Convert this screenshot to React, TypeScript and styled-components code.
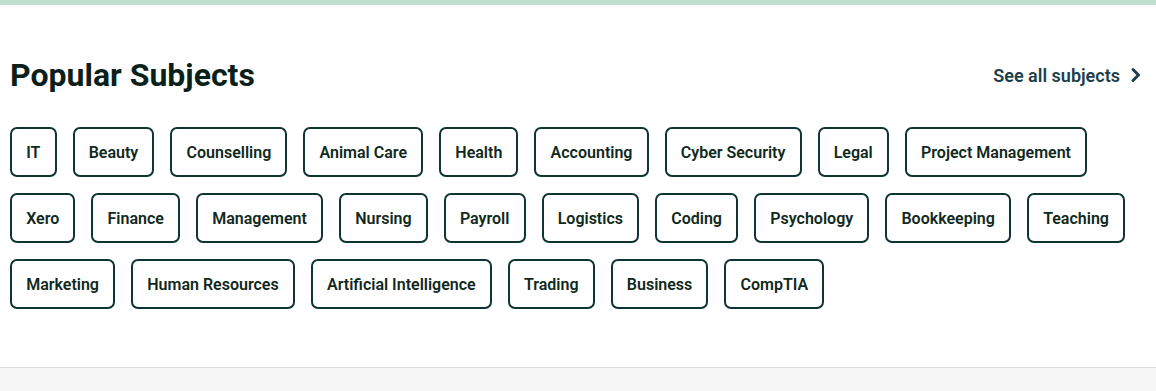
import styled, { createGlobalStyle } from "styled-components"

const GlobalStyle = createGlobalStyle`
  body {
    margin: 0;
    font-family: Roboto, "Liberation Sans", sans-serif;
    background: #ffffff;
  }
`

const subjects = [
  "IT",
  "Beauty",
  "Counselling",
  "Animal Care",
  "Health",
  "Accounting",
  "Cyber Security",
  "Legal",
  "Project Management",
  "Xero",
  "Finance",
  "Management",
  "Nursing",
  "Payroll",
  "Logistics",
  "Coding",
  "Psychology",
  "Bookkeeping",
  "Teaching",
  "Marketing",
  "Human Resources",
  "Artificial Intelligence",
  "Trading",
  "Business",
  "CompTIA",
]

export default function App() {
  return (
    <>
      <GlobalStyle />
      <TopBar />
      <Section>
        <Header>
          <Title>Popular Subjects</Title>
          <SeeAll href="#">
            See all subjects
            <svg width="14" height="16" viewBox="0 0 14 16" fill="none">
              <path
                d="M4 2.5 L9.5 8 L4 13.5"
                stroke="#1d3f4c"
                strokeWidth="3"
                strokeLinecap="round"
                strokeLinejoin="round"
              />
            </svg>
          </SeeAll>
        </Header>
        <Chips>
          {subjects.map((s) => (
            <Chip key={s} href="#">
              {s}
            </Chip>
          ))}
        </Chips>
      </Section>
      <Footer />
    </>
  )
}

const TopBar = styled.div`
  height: 5px;
  background: #c0e0cf;
`

const Section = styled.section`
  padding: 52px 13px 58px 10px;
`

const Header = styled.div`
  display: flex;
  align-items: center;
  justify-content: space-between;
  margin-bottom: 34px;
`

const Title = styled.h2`
  margin: 0;
  font-size: 32px;
  line-height: 36px;
  font-weight: 700;
  color: #0b1f1b;
`

const SeeAll = styled.a`
  display: flex;
  align-items: center;
  gap: 9px;
  font-size: 18px;
  font-weight: 600;
  color: #1d3f4c;
  text-decoration: none;
`

const Chips = styled.div`
  display: flex;
  flex-wrap: wrap;
  gap: 16px 16px;
  max-width: 1130px;
`

const Chip = styled.a`
  display: flex;
  align-items: center;
  height: 50px;
  box-sizing: border-box;
  padding: 0 14.15px;
  border: 2px solid #0f3533;
  border-radius: 7px;
  font-size: 16px;
  font-weight: 600;
  color: #10291c;
  text-decoration: none;
`

const Footer = styled.div`
  height: 24px;
  background: #f7f7f7;
  border-top: 1px solid #dcdcdc;
`
